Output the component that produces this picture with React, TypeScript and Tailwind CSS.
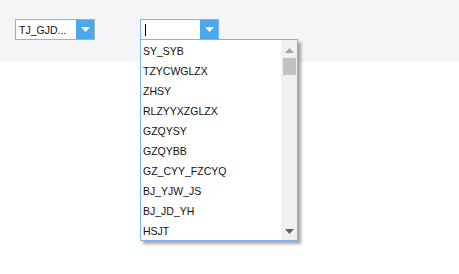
import React from "react";

const items = [
  "SY_SYB",
  "TZYCWGLZX",
  "ZHSY",
  "RLZYYXZGLZX",
  "GZQYSY",
  "GZQYBB",
  "GZ_CYY_FZCYQ",
  "BJ_YJW_JS",
  "BJ_JD_YH",
  "HSJT",
];

function Arrow() {
  return (
    <svg width="9" height="5" viewBox="0 0 9 5">
      <path d="M0 0 L9 0 L4.5 5 Z" fill="#ffffff" />
    </svg>
  );
}

export default function App() {
  const font = { fontFamily: '"Liberation Sans", Arial, sans-serif' };
  return (
    <div className="w-[459px] h-[274px] bg-white relative text-[10.5px] text-[#111]" style={font}>
      <div className="h-[62px] bg-[#f4f5f7] flex items-start pt-[19px] pl-[15px]">
        <div className="flex h-[21px] w-[80px] border border-[#abadb3] bg-white">
          <div className="flex-1 flex items-center pl-[3px] pt-px leading-none">TJ_GJD...</div>
          <div className="w-[18px] bg-[#4aa8ee] flex items-center justify-center">
            <Arrow />
          </div>
        </div>
        <div className="ml-[45px] relative">
          <div className="flex h-[21px] w-[79px] border border-[#7eb4ea] bg-white">
            <div className="flex-1 flex items-center pl-[4px]">
              <div className="w-px h-[12px] bg-black" />
            </div>
            <div className="w-[18px] bg-[#4aa8ee] flex items-center justify-center">
              <Arrow />
            </div>
          </div>
          <div className="absolute left-0 top-[20px] w-[158px] h-[202px] border border-[#7eb4ea] bg-white flex shadow-[3px_3px_3px_rgba(0,0,0,0.35)] z-10">
            <div className="flex-1 flex flex-col">
              {items.map((it) => (
                <div key={it} className="h-[20px] flex items-center pl-[2px] pt-[3px] leading-none">
                  {it}
                </div>
              ))}
            </div>
            <div className="w-[16px] bg-[#f0f0f0] flex flex-col items-center">
              <div className="h-[17px] flex items-center justify-center pt-[3px]">
                <svg width="9" height="5" viewBox="0 0 9 5">
                  <path d="M0 5 L9 5 L4.5 0 Z" fill="#a3a3a3" />
                </svg>
              </div>
              <div className="w-[13px] h-[17px] bg-[#c1c1c1] mt-[1px]" />
              <div className="flex-1" />
              <div className="h-[17px] flex items-center justify-center pb-[1px]">
                <svg width="9" height="5" viewBox="0 0 9 5">
                  <path d="M0 0 L9 0 L4.5 5 Z" fill="#606060" />
                </svg>
              </div>
            </div>
          </div>
        </div>
      </div>
    </div>
  );
}
